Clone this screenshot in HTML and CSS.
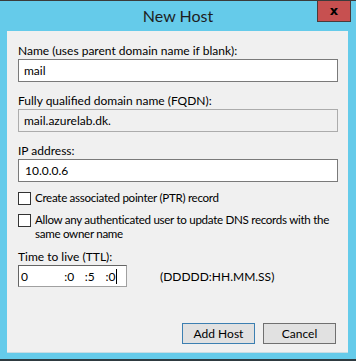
FILE: index.html
```html
<!DOCTYPE html>
<html lang="en">
<head>
    <meta charset="UTF-8">
    <title>New Host</title>
    <link rel="stylesheet" href="styles.css">
</head>
<body>

    <div class="window">
        <!-- Barra de título -->
        <div class="title-bar">
            <span></span>
            <span class="title">New Host</span>
            <span class="close-wrap"><span class="close-btn">x</span></span>
        </div>

        <div class="client">
            <label class="field-label">Name (uses parent domain name if blank):</label>
            <div class="text-box">mail</div>

            <label class="field-label">Fully qualified domain name (FQDN):</label>
            <div class="text-box readonly">mail.azurelab.dk.</div>

            <label class="field-label">IP address:</label>
            <div class="text-box ip-box">10.0.0.6</div>

            <div class="check-row first">
                <span class="check-box"></span>
                <span class="check-text">Create associated pointer (PTR) record</span>
            </div>
            <div class="check-row">
                <span class="check-box"></span>
                <span class="check-text">Allow any authenticated user to update DNS records with the same owner name</span>
            </div>

            <label class="field-label ttl-label">Time to live (TTL):</label>
            <div class="ttl-row">
                <div class="ttl-box">
                    <span class="ttl-days">0</span>
                    <span class="ttl-part">:0</span>
                    <span class="ttl-part">:5</span>
                    <span class="ttl-part last">:0<span class="caret"></span></span>
                </div>
                <span class="ttl-format">(DDDDD:HH.MM.SS)</span>
            </div>

            <div class="buttons">
                <button class="btn default">Add Host</button>
                <button class="btn">Cancel</button>
            </div>
        </div>
    </div>

</body>
</html>
```

FILE: styles.css
```css
body {
    margin: 0;
    padding: 0;
    font-family: Lato, "Liberation Sans", Arial, sans-serif;
    font-size: 12px;
    color: #000000;
}

.window {
    width: 356px;
    height: 361px;
    box-sizing: border-box;
    background-color: #65cbea;
    border-top: 1px solid #3b3b3b;
    border-bottom: 2px solid #2e3a40;
    display: flex;
    flex-direction: column;
}

.title-bar {
    height: 30px;
    display: grid;
    grid-template-columns: 1fr auto 1fr;
    align-items: start;
}

.title {
    font-size: 16px;
    color: #1e1e1e;
    padding-top: 5px;
}

.close-wrap {
    display: flex;
    justify-content: flex-end;
    padding-right: 5px;
}

.close-btn {
    width: 34px;
    height: 21px;
    box-sizing: border-box;
    background-color: #c75050;
    border: 1px solid #4a3a3a;
    border-top: none;
    color: #000000;
    font-family: "DejaVu Sans", sans-serif;
    font-weight: bold;
    font-size: 13px;
    line-height: 19px;
    text-align: center;
}

.client {
    flex: 1;
    margin: 0 8px 6px 7px;
    background-color: #f0f0f0;
    padding: 12px 10px 0 11px;
    display: flex;
    flex-direction: column;
    border-bottom: 1px solid #c9dce3;
}

.field-label {
    display: block;
    line-height: 15px;
    margin-bottom: 1px;
}

.text-box {
    height: 23px;
    box-sizing: border-box;
    border: 1px solid #7a7a7a;
    background-color: #ffffff;
    padding-left: 5px;
    line-height: 21px;
    margin-bottom: 11px;
}

.text-box.readonly {
    background-color: #f0f0f0;
    border-color: #acacac;
}

.ip-box {
    padding-left: 6px;
    margin-bottom: 10px;
}

.check-row {
    display: flex;
    align-items: flex-start;
    gap: 4px;
    line-height: 14px;
    margin-top: 9px;
}

.check-row.first {
    margin-top: 0;
}

.check-box {
    flex: none;
    width: 13px;
    height: 13px;
    box-sizing: border-box;
    border: 1px solid #333333;
    background-color: #ffffff;
}

.check-text {
    margin-top: -1px;
    font-size: 11.6px;
    letter-spacing: -0.3px;
}

.ttl-label {
    margin-top: 8px;
    margin-bottom: 1px;
}

.ttl-row {
    display: flex;
    align-items: center;
    gap: 33px;
}

.ttl-box {
    width: 109px;
    height: 22px;
    box-sizing: border-box;
    border: 1px solid #a0a0a0;
    border-top-color: #646464;
    border-left-color: #646464;
    background-color: #ffffff;
    display: flex;
    align-items: center;
    padding-left: 2px;
}

.ttl-days {
    width: 44px;
}

.ttl-part {
    width: 21px;
}

.ttl-part.last {
    display: flex;
    align-items: center;
}

.caret {
    display: inline-block;
    width: 1px;
    height: 15px;
    background-color: #000000;
    margin-left: 1px;
}

.buttons {
    display: flex;
    justify-content: flex-end;
    gap: 8px;
    margin-top: 36px;
    padding-right: 2px;
}

.btn {
    width: 73px;
    height: 21px;
    box-sizing: border-box;
    background-color: #e1e1e1;
    border: 1px solid #707070;
    font-family: Lato, "Liberation Sans", Arial, sans-serif;
    font-size: 12px;
    color: #000000;
    padding: 0;
}

.btn.default {
    border-color: #3c7fb1;
}
```
